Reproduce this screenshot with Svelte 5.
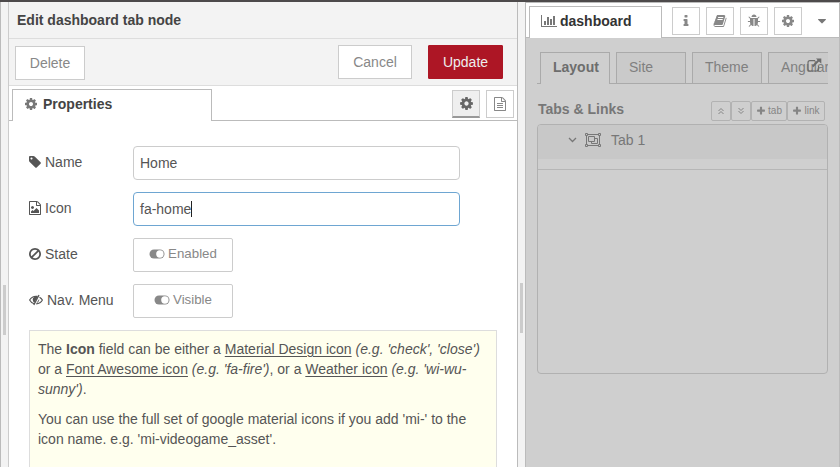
<script>
  const fileBase = 'M1596 380q28 28 48 76t20 88v1152q0 40-28 68t-68 28h-1344q-40 0-68-28t-28-68v-1600q0-40 28-68t68-28h896q40 0 88 20t76 48zm-444-244v376h376q-10-29-22-41l-313-313q-12-12-41-22zm384 1528v-1024h-416q-40 0-68-28t-28-68v-416h-768v1536h1280z';
  const icons = {
    cog: 'M1152 896q0-106-75-181t-181-75-181 75-75 181 75 181 181 75 181-75 75-181zm512-109v222q0 12-8 23t-20 13l-185 28q-19 54-39 91 35 50 107 138 10 12 10 25t-9 23q-27 37-99 108t-94 71q-12 0-26-9l-138-108q-44 23-91 38-16 136-29 186-7 28-36 28h-222q-14 0-24.5-8.5t-11.5-21.5l-28-184q-49-16-90-37l-141 107q-10 9-25 9-14 0-25-11-126-114-165-168-7-10-7-23 0-12 8-23 15-21 51-66.5t54-70.5q-27-50-41-99l-183-27q-13-2-21-12.5t-8-23.5v-222q0-12 8-23t19-13l186-28q14-46 39-92-40-57-107-138-10-12-10-24 0-10 9-23 26-36 98.5-107.5t94.5-71.5q13 0 26 10l138 107q44-23 91-38 16-136 29-186 7-28 36-28h222q14 0 24.5 8.5t11.5 21.5l28 184q49 16 90 37l142-107q9-9 24-9 13 0 25 10 129 119 165 170 7 8 7 22 0 12-8 23-15 21-51 66.5t-54 70.5q26 50 41 98l183 28q13 2 21 12.5t8 23.5z',
    doc: fileBase + 'm-1024-864q0-14 9-23t23-9h704q14 0 23 9t9 23v64q0 14-9 23t-23 9h-704q-14 0-23-9t-9-23v-64zm736 224q14 0 23 9t9 23v64q0 14-9 23t-23 9h-704q-14 0-23-9t-9-23v-64q0-14 9-23t23-9h704zm0 256q14 0 23 9t9 23v64q0 14-9 23t-23 9h-704q-14 0-23-9t-9-23v-64q0-14 9-23t23-9h704z',
    image: fileBase + 'm-128-448v320h-1024v-192l192-192 128 128 384-384zm-832-192q-80 0-136-56t-56-136 56-136 136-56 136 56 56 136-56 136-136 56z',
    tag: 'M576 448q0-53-37.5-90.5t-90.5-37.5-90.5 37.5-37.5 90.5 37.5 90.5 90.5 37.5 90.5-37.5 37.5-90.5zm1067 576q0 53-37 90l-491 492q-39 37-91 37-53 0-90-37l-715-716q-38-37-64.5-101t-26.5-117v-416q0-52 38-90t90-38h416q53 0 117 26.5t102 64.5l715 714q37 39 37 91z',
    ban: 'M1440 893q0-161-87-295l-754 753q137 89 297 89 111 0 211.5-43.5t173.5-116.5 116-174.5 43-212.5zm-999 299l755-754q-135-91-300-91-148 0-273 73t-198 199-73 274q0 162 89 299zm1223-299q0 157-61 300t-163.5 246-245 164-298.5 61-298.5-61-245-164-163.5-246-61-300 61-299.5 163.5-245.5 245-164 298.5-61 298.5 61 245 164 163.5 245.5 61 299.5z',
    info: 'M1216 1344v128q0 26-19 45t-45 19h-512q-26 0-45-19t-19-45v-128q0-26 19-45t45-19h64v-384h-64q-26 0-45-19t-19-45v-128q0-26 19-45t45-19h384q26 0 45 19t19 45v576h64q26 0 45 19t19 45zm-128-1152v192q0 26-19 45t-45 19h-256q-26 0-45-19t-19-45v-192q0-26 19-45t45-19h256q26 0 45 19t19 45z',
    book: 'M1703 478q40 57 18 129l-275 906q-19 64-76.5 107.5t-122.5 43.5h-923q-77 0-148.5-53.5t-99.5-131.5q-24-67-2-127 0-4 3-27t4-37q1-8-3-21.5t-3-19.5q2-11 8-21t16.5-23.5 16.5-23.5q23-38 45-91.5t30-91.5q3-10 .5-30t-.5-28q3-11 17-28t17-23q21-36 42-92t25-90q1-9-2.5-32t.5-28q4-13 22-30.5t22-22.5q19-26 42.5-84.5t27.5-96.5q1-8-3-25.5t-2-26.5q2-8 9-18t18-23 17-21q8-12 16.5-30.5t15-35 16-36 19.5-32 26.5-23.5 36-11.5 47.5 5.5l-1 3q38-9 51-9h761q74 0 114 56t18 130l-274 906q-36 119-71.5 153.5t-128.5 34.5h-869q-27 0-38 15-11 16-1 43 24 70 144 70h923q29 0 56-15.5t35-41.5l300-987q7-22 5-57 38 15 59 43zm-1064 2q-4 13 2 22.5t20 9.5h608q13 0 25.5-9.5t16.5-22.5l21-64q4-13-2-22.5t-20-9.5h-608q-13 0-25.5 9.5t-16.5 22.5zm-83 256q-4 13 2 22.5t20 9.5h608q13 0 25.5-9.5t16.5-22.5l21-64q4-13-2-22.5t-20-9.5h-608q-13 0-25.5 9.5t-16.5 22.5z',
    bug: 'M1696 960q0 26-19 45t-45 19h-224q0 171-67 290l208 209q19 19 19 45t-19 45q-18 19-45 19t-45-19l-198-197q-5 5-15 13t-42 28.5-65 36.5-82 29-97 13v-896h-128v896q-51 0-101.5-13.5t-87-33-66-39-43.5-32.5l-15-14-183 207q-20 21-48 21-24 0-43-16-19-18-20.5-44.5t15.5-46.5l202-227q-58-114-58-274h-224q-26 0-45-19t-19-45 19-45 45-19h224v-294l-173-173q-19-19-19-45t19-45 45-19 45 19l173 173h844l173-173q19-19 45-19t45 19 19 45-19 45l-173 173v294h224q26 0 45 19t19 45zm-480-576h-640q0-133 93.5-226.5t226.5-93.5 226.5 93.5 93.5 226.5z',
    caret: 'M1408 704q0 26-19 45l-448 448q-19 19-45 19t-45-19l-448-448q-19-19-19-45t19-45 45-19h896q26 0 45 19t19 45z',
    plus: 'M1600 736v192q0 40-28 68t-68 28h-416v416q0 40-28 68t-68 28h-192q-40 0-68-28t-28-68v-416h-416q-40 0-68-28t-28-68v-192q0-40 28-68t68-28h416v-416q0-40 28-68t68-28h192q40 0 68 28t28 68v416h416q40 0 68 28t28 68z',
  };
  const sideButtons = ['info', 'book', 'bug', 'cog'];
  const sideTabs = ['Layout', 'Site', 'Theme', 'Angular'];
</script>

{#snippet icon(name, size)}
  <svg class="icon" width={size} height={size} viewBox="0 0 1792 1792" fill="currentColor"><path d={icons[name]} /></svg>
{/snippet}

{#snippet toggle()}
  <svg class="icon" width="16" height="10" viewBox="0 0 16 10"><rect x=".5" y=".5" width="15" height="9" rx="4.5" fill="currentColor" /><circle cx="10.9" cy="5" r="3.7" fill="#fff" /></svg>
{/snippet}

<div class="app">
  <div class="gutter left"><i class="grip"></i></div>

  <section class="editor">
    <header>Edit dashboard tab node</header>
    <div class="toolbar">
      <button class="btn delete">Delete</button>
      <span class="fill"></span>
      <button class="btn cancel">Cancel</button>
      <button class="btn update">Update</button>
    </div>
    <div class="tabbar">
      <div class="tab">{@render icon('cog', 14)}<span>Properties</span></div>
      <span class="fill"></span>
      <button class="sq selected">{@render icon('cog', 15)}</button>
      <button class="sq">{@render icon('doc', 14)}</button>
    </div>
    <div class="form">
      <div class="row">
        <div class="label">{@render icon('tag', 14)}<span>Name</span></div>
        <div class="input">Home</div>
      </div>
      <div class="row">
        <div class="label">{@render icon('image', 14)}<span>Icon</span></div>
        <div class="input focus">fa-home<i class="cursor"></i></div>
      </div>
      <div class="row">
        <div class="label">{@render icon('ban', 14)}<span>State</span></div>
        <button class="switch">{@render toggle()}Enabled</button>
      </div>
      <div class="row">
        <div class="label eye">
          <svg class="icon" width="14" height="12" viewBox="0 0 14 12" fill="none" stroke="currentColor">
            <path d="M5.2 9.8Q2.2 9 .6 6Q3 2.2 7 2.2L8.5 2.4M10.5 3.2Q12.4 4.3 13.4 6Q11.5 9.6 7.2 9.9" stroke-width="1.15" />
            <path d="M10 1L4.8 11" stroke-width="1.3" />
            <path d="M8 2.6Q4 2.5 3.7 5.4Q3.7 7.6 5.4 8.8L8.9 2.8zM10.2 5Q10.4 8 7.4 9.2z" fill="currentColor" stroke="none" />
          </svg>
          <span>Nav. Menu</span>
        </div>
        <button class="switch">{@render toggle()}Visible</button>
      </div>
      <div class="tips">
        <p>The <b>Icon</b> field can be either a <u>Material Design icon</u> <em>(e.g. 'check', 'close')</em><br />or a <u>Font Awesome icon</u> <em>(e.g. 'fa-fire')</em>, or a <u>Weather icon</u> <em>(e.g. 'wi-wu-<br />sunny')</em>.</p>
        <p>You can use the full set of google material icons if you add 'mi-' to the<br />icon name. e.g. 'mi-videogame_asset'.</p>
      </div>
    </div>
  </section>

  <div class="gutter middle"><i class="grip"></i></div>

  <aside>
    <div class="sidebar-top">
      <div class="dash">
        <svg class="icon" width="16" height="14" viewBox="0 0 2048 1792" fill="currentColor"><path d="M640 896v512h-256v-512h256zm384-512v1024h-256v-1024h256zm1024 1152v128h-2048v-1536h128v1408h1920zm-640-896v768h-256v-768h256zm384-384v1152h-256v-1152h256z" /></svg>
        <span>dashboard</span>
      </div>
      {#each sideButtons as name}
        <button class="sq">{@render icon(name, 14)}</button>
      {/each}
      <span class="caret">{@render icon('caret', 14)}</span>
    </div>
    <div class="shade">
      <div class="subtabs">
        {#each sideTabs as name, i}
          <div class="subtab" class:active={i === 0}>{name}</div>
        {/each}
        <svg class="external" width="15" height="15" viewBox="0 0 15 15" fill="none" stroke="currentColor">
          <path d="M8.2 2.7H3Q1 2.7 1 4.7V11Q1 13 3 13H9.5Q11.5 13 11.5 11V8" stroke-width="1.2" />
          <path d="M5.6 8.5L11.8 2.3" stroke-width="2" />
          <path d="M9 .5H14.3V5.8z" fill="currentColor" stroke="none" />
        </svg>
      </div>
      <div class="heading">
        <span class="title">Tabs &amp; Links</span>
        <button class="mini narrow"><svg width="8" height="8" viewBox="0 0 8 8" fill="none" stroke="currentColor"><path d="M1.5 4L4 1.5L6.5 4M1.5 7L4 4.5L6.5 7" /></svg></button>
        <button class="mini narrow"><svg width="8" height="8" viewBox="0 0 8 8" fill="none" stroke="currentColor"><path d="M1.5 1L4 3.5L6.5 1M1.5 4L4 6.5L6.5 4" /></svg></button>
        <button class="mini tabbtn">{@render icon('plus', 10)}tab</button>
        <button class="mini linkbtn">{@render icon('plus', 10)}link</button>
      </div>
      <div class="list">
        <div class="item">
          <svg class="chev" width="9" height="6" viewBox="0 0 9 6" fill="none" stroke="currentColor" stroke-width="1.3"><path d="M1 1L4.5 4.5L8 1" /></svg>
          <svg class="group" width="16" height="14" viewBox="0 0 16 14" fill="none" stroke="currentColor">
            <path d="M3 1.5H13M3 12.5H13M1.5 3V11M14.5 3V11M.5 .5h2v2h-2zM13.5 .5h2v2h-2zM.5 11.5h2v2h-2zM13.5 11.5h2v2h-2z" />
            <path d="M3.5 3.5h6v5h-6zM9.5 5.5h3v5h-6v-2" />
          </svg>
          <span>Tab 1</span>
        </div>
        <div class="spacer"></div>
      </div>
    </div>
  </aside>
</div>

<style>
  :global(body) { margin: 0; overflow: hidden; }
  .app, .app * { box-sizing: border-box; }
  .app {
    display: flex;
    width: 840px;
    height: 467px;
    border-top: 2px solid #4d4a4b;
    background: #fff;
    color: #555;
    font: 14px/20px "Liberation Sans", Arial, sans-serif;
    overflow: hidden;
  }
  button { font: inherit; margin: 0; padding: 0; color: #888; background: #fff; border: 1px solid #ccc; flex: none; }
  svg { flex: none; display: block; }
  .fill { flex: 1; }

  .gutter { flex: none; background: #f3f3f3; border: 1px solid #bbb; border-width: 0 1px; }
  .gutter .grip { display: block; width: 3px; height: 50px; background: #ccc; }
  .left { width: 9px; padding: 283px 0 0 2px; border-right-color: #ccc; }
  .middle { width: 9px; padding: 281px 0 0 2px; }

  .editor { width: 508px; flex: none; display: flex; flex-direction: column; }
  header { height: 37px; flex: none; padding: 8px 8px 0; background: #f3f3f3; border-bottom: 1px solid #ddd; color: #444; font-weight: bold; }
  .toolbar { height: 47px; flex: none; display: flex; align-items: flex-start; padding: 6px 14px 0 6px; background: #f3f3f3; border-bottom: 1px solid #ddd; }
  .btn { height: 34px; }
  .delete { width: 70px; margin-top: 1px; }
  .cancel { width: 74px; margin-right: 16px; }
  .update { width: 75px; color: #eee; background: #ad1625; border-color: #ad1625; border-radius: 1px; }
  .tabbar { height: 35px; flex: none; display: flex; padding: 3px 3px 0; border-bottom: 1px solid #bbb; }
  .tab { width: 200px; height: 32px; display: flex; align-items: center; gap: 5px; padding: 0 0 3px 11px; border: 1px solid #bbb; border-bottom: 0; background: #fff; color: #444; font-weight: bold; }
  .tab .icon { color: #777; }
  .sq { width: 28px; height: 28px; display: flex; align-items: center; justify-content: center; }
  .tabbar .sq { margin: 1px 0 0 6px; }
  .tabbar .selected { background: #efefef; border-bottom: 2px solid #999; color: #666; }

  .form { padding: 25px 20px 0; }
  .row { display: flex; height: 34px; margin-bottom: 12px; }
  .label { width: 104px; display: flex; align-items: center; gap: 3px; padding-bottom: 2px; margin-left: -1px; }
  .label + * { margin-left: 1px; }
  .eye { gap: 4px; padding-left: 1px; }
  .input { width: 327px; height: 34px; display: flex; align-items: center; padding: 0 6px; border: 1px solid #ccc; border-radius: 4px; }
  .focus { border-color: #6ea6d2; }
  .cursor { width: 1px; height: 16px; background: #222; }
  .switch { width: 100px; height: 34px; display: flex; align-items: center; justify-content: center; gap: 3px; padding-bottom: 2px; border-radius: 2px; font-size: 13.3px; }
  .tips { width: 468px; height: 200px; padding: 8px 8px; border: 1px solid #ddd; background: #ffe; }
  .tips p { margin: 0 0 10px; white-space: nowrap; }
  u { text-underline-offset: 2px; }

  aside { width: 314px; flex: none; display: flex; flex-direction: column; border-right: 1px solid #bbb; border-top: 1px solid #bbb; }
  .sidebar-top { height: 35px; flex: none; display: flex; padding: 3px 0 0 3px; border-bottom: 1px solid #bbb; background: #fff; }
  .dash { width: 133px; height: 32px; display: flex; align-items: center; gap: 3px; padding: 0 0 3px 11px; margin-right: 4px; border: 1px solid #bbb; border-bottom: 0; background: #fff; color: #333; font-weight: bold; }
  .dash .icon { color: #777; }
  .sidebar-top .sq { margin: 1px 0 0 6px; }
  .caret { margin: 8px 0 0 13px; color: #777; }

  .shade { flex: 1; padding: 14px 11px 0; background: #cfcfcf; color: #777; }
  .subtabs { position: relative; height: 32px; display: flex; gap: 6px; padding-left: 3px; border-bottom: 1px solid #aaa; }
  .subtab { width: 70px; height: 31px; flex: none; padding: 4px 12px; border: 1px solid #aaa; border-bottom: 0; background: #cacaca; color: #808080; }
  .subtab:nth-child(4) { width: 60px; border-right: 0; padding-right: 0; overflow: hidden; }
  .active { height: 32px; background: #cfcfcf; color: #6d6d6d; font-weight: bold; }
  .external { position: absolute; top: 6px; right: 6px; color: #6c6c6c; }
  .heading { height: 40px; display: flex; align-items: flex-start; padding: 17px 3px 0 1px; }
  .title { flex: 1; font-weight: bold; margin-top: -2px; }
  .mini { height: 20px; display: flex; align-items: center; justify-content: center; gap: 2px; background: transparent; border-color: #b2b2b2; border-radius: 2px; font-size: 10px; color: #858585; }
  .narrow { width: 20px; }
  .tabbtn { width: 36px; }
  .linkbtn { width: 38px; }
  .list { height: 250px; border: 1px solid #b1b1b1; border-radius: 4px; overflow: hidden; }
  .item { height: 34px; display: flex; align-items: center; padding: 0 0 4px 30px; background: #c8c8c8; }
  .group { margin: 0 10px 0 8px; }
  .spacer { height: 11px; border-bottom: 1px solid #b6b6b6; }
</style>
